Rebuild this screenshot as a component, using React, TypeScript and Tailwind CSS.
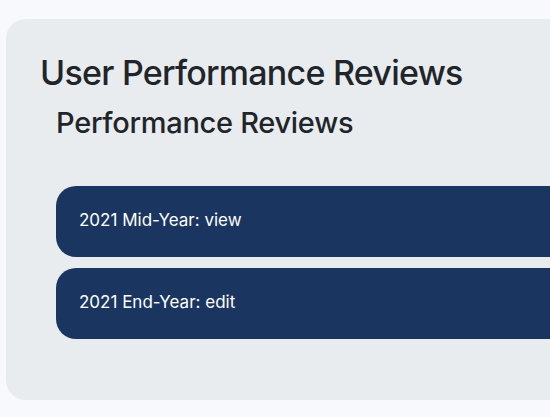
export default function App() {
  const reviews = ['2021 Mid-Year: view', '2021 End-Year: edit'];

  return (
    <div className="h-[417px] overflow-hidden bg-[#f8f9fc] pl-[6px] pt-[19px] font-['Inter',sans-serif] text-[#212529]">
      <div className="w-[600px] rounded-[20px] bg-[#e8ecef] pb-[61px] pl-[34px] pt-[34px]">
        <h1 className="text-[34px] font-medium leading-[1.2] tracking-[-0.022em]">
          User Performance Reviews
        </h1>
        <div className="pl-4">
          <h2 className="mt-[12px] text-[29px] font-medium leading-[1.2] tracking-[-0.01em]">
            Performance Reviews
          </h2>
          <div className="mt-[45px] flex flex-col gap-[11px]">
            {reviews.map((r) => (
              <div
                key={r}
                className="flex h-[71px] items-center rounded-[20px] bg-[#1a3560] px-[23px] text-[17px] text-white"
              >
                {r}
              </div>
            ))}
          </div>
        </div>
      </div>
    </div>
  );
}
